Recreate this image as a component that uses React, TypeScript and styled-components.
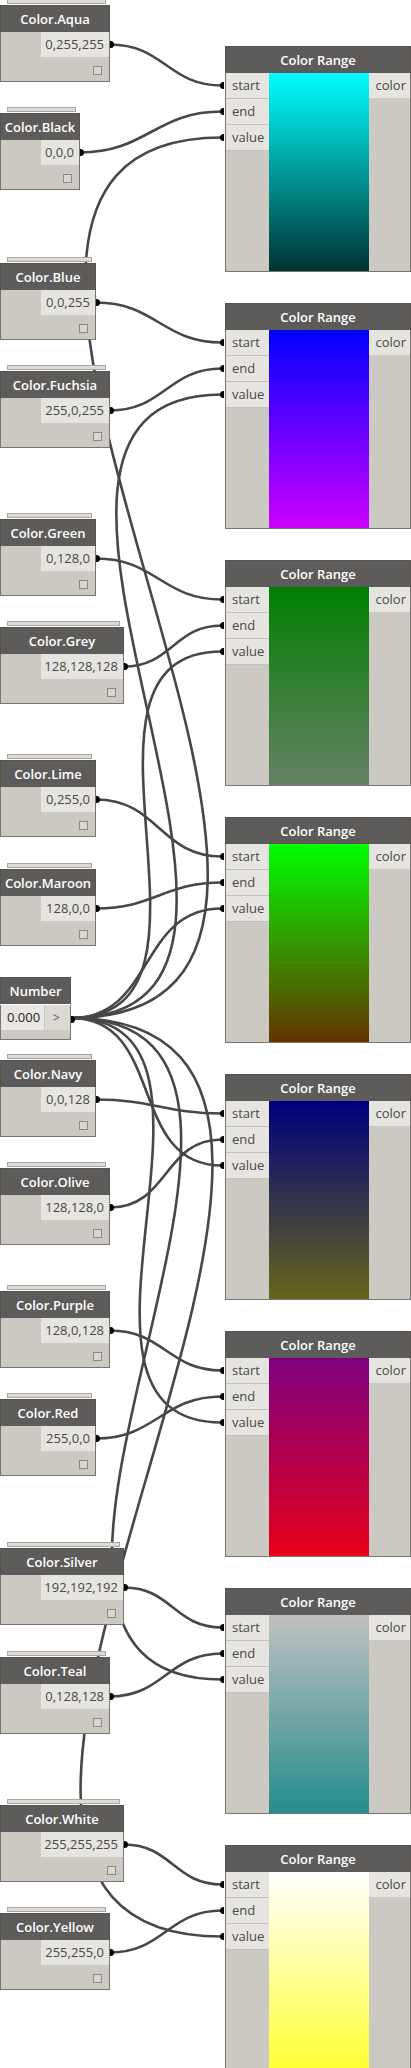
import React from 'react';
import styled, { createGlobalStyle } from 'styled-components';

const GlobalStyle = createGlobalStyle`
  html, body {
    margin: 0;
    padding: 0;
    background: #ffffff;
  }
  body {
    font-family: 'Open Sans', 'Noto Sans', sans-serif;
  }
`;

type RGB = [number, number, number];

type ColorNodeData = {
	name: string;
	rgb: RGB;
	top: number;
	width: number;
};

const HEADER_H = 27;
const RANGE_LEFT = 225;
const RANGE_TOP = 46;
const RANGE_STEP = 257;

const colorNodes: ColorNodeData[] = [
	{ name: 'Aqua', rgb: [0, 255, 255], top: 5, width: 110 },
	{ name: 'Black', rgb: [0, 0, 0], top: 113, width: 80 },
	{ name: 'Blue', rgb: [0, 0, 255], top: 263, width: 96 },
	{ name: 'Fuchsia', rgb: [255, 0, 255], top: 371, width: 110 },
	{ name: 'Green', rgb: [0, 128, 0], top: 519, width: 96 },
	{ name: 'Grey', rgb: [128, 128, 128], top: 627, width: 124 },
	{ name: 'Lime', rgb: [0, 255, 0], top: 760, width: 96 },
	{ name: 'Maroon', rgb: [128, 0, 0], top: 869, width: 96 },
	{ name: 'Navy', rgb: [0, 0, 128], top: 1060, width: 96 },
	{ name: 'Olive', rgb: [128, 128, 0], top: 1168, width: 110 },
	{ name: 'Purple', rgb: [128, 0, 128], top: 1291, width: 110 },
	{ name: 'Red', rgb: [255, 0, 0], top: 1399, width: 96 },
	{ name: 'Silver', rgb: [192, 192, 192], top: 1548, width: 124 },
	{ name: 'Teal', rgb: [0, 128, 128], top: 1657, width: 110 },
	{ name: 'White', rgb: [255, 255, 255], top: 1805, width: 124 },
	{ name: 'Yellow', rgb: [255, 255, 0], top: 1913, width: 110 },
];

const numberNode = { top: 977, width: 71, portY: 1018 };

const ranges = Array.from({ length: 8 }, (_, i) => ({
	top: RANGE_TOP + RANGE_STEP * i,
	start: colorNodes[i * 2],
	end: colorNodes[i * 2 + 1],
}));

// preview stops a bit short of the end colour
const mix = (a: RGB, b: RGB, t: number) =>
	`rgb(${a.map((v, k) => Math.round(v + (b[k] - v) * t)).join(',')})`;

const outPort = (n: ColorNodeData) => ({ x: n.width, y: n.top + HEADER_H + 12.5 });
const inPort = (top: number, row: number) => ({ x: RANGE_LEFT - 3, y: top + HEADER_H + 12.5 + row * 26 });

// dynamo style connector: horizontal tangents, offset grows with length
const wirePath = (a: { x: number; y: number }, b: { x: number; y: number }) => {
	const d = 0.45 * Math.hypot(b.x - a.x, b.y - a.y);
	return `M${a.x},${a.y} C${a.x + d},${a.y} ${b.x - d},${b.y} ${b.x},${b.y}`;
};

const wires: string[] = [];
ranges.forEach((r) => {
	wires.push(wirePath(outPort(r.start), inPort(r.top, 0)));
	wires.push(wirePath(outPort(r.end), inPort(r.top, 1)));
	wires.push(wirePath({ x: numberNode.width, y: numberNode.portY }, inPort(r.top, 2)));
});

const Canvas = styled.div`
	position: relative;
	width: 411px;
	height: 2068px;
	overflow: hidden;
	background: #ffffff;
`;

const WireLayer = styled.svg`
	position: absolute;
	left: 0;
	top: 0;
`;

const NodeBox = styled.div<{ $top: number; $left?: number; $width: number }>`
	position: absolute;
	top: ${(p) => p.$top}px;
	left: ${(p) => p.$left ?? 0}px;
	width: ${(p) => p.$width}px;
	box-sizing: border-box;
`;

const Stack = styled.div`
	position: absolute;
	top: -6px;
	left: 7px;
	right: 4px;
	height: 3px;
	border: 1px solid #a9a6a1;
	background: #dedbd6;
`;

const Header = styled.div`
	height: ${HEADER_H}px;
	background: #5e5c5a;
	border: 1px solid #55524f;
	border-bottom: none;
	box-sizing: border-box;
	color: #ffffff;
	font-size: 13px;
	font-weight: 600;
	line-height: 26px;
	text-align: center;
	white-space: nowrap;
`;

const Body = styled.div<{ $h: number }>`
	position: relative;
	height: ${(p) => p.$h}px;
	background: #ccc8c2;
	border: 1px solid #787571;
	border-top: none;
	box-sizing: border-box;
`;

const OutLabel = styled.div`
	position: relative;
	margin-left: 40px;
	height: 25px;
	padding-right: 5px;
	background: #e6e4e0;
	color: #4a4845;
	font-size: 13px;
	line-height: 25px;
	text-align: right;
	white-space: nowrap;
`;

const OutDot = styled.span<{ $y?: number }>`
	position: absolute;
	top: ${(p) => p.$y ?? 9}px;
	right: -5px;
	width: 4px;
	height: 7px;
	background: #000;
	border-radius: 0 4px 4px 0;
`;

const Check = styled.span`
	position: absolute;
	right: 7px;
	bottom: 6px;
	width: 9px;
	height: 9px;
	box-sizing: border-box;
	border: 1px solid #8c8984;
	background: #d9d6d1;
`;

const RangeBody = styled.div`
	display: grid;
	grid-template-columns: 43px 100px 1fr;
	height: 199px;
	background: #ccc8c2;
	border: 1px solid #787571;
	border-top: none;
	box-sizing: border-box;
`;

const InCol = styled.div`
	display: flex;
	flex-direction: column;
`;

const InLabel = styled.div`
	position: relative;
	height: 25px;
	padding-left: 6px;
	background: #e6e4e0;
	border-bottom: 1px solid #c4bfb8;
	color: #4a4845;
	font-size: 13px;
	line-height: 25px;
`;

const InDot = styled.span`
	position: absolute;
	left: -6px;
	top: 9px;
	width: 4px;
	height: 7px;
	background: #000;
	border-radius: 4px 0 0 4px;
`;

const Swatch = styled.div<{ $from: string; $to: string }>`
	background: linear-gradient(to bottom, ${(p) => p.$from}, ${(p) => p.$to});
`;

const OutCol = styled.div`
	display: flex;
	flex-direction: column;
`;

const ColorOut = styled.div`
	height: 25px;
	padding-right: 4px;
	background: #e6e4e0;
	color: #4a4845;
	font-size: 13px;
	line-height: 25px;
	text-align: right;
`;

const NumberRow = styled.div`
	display: flex;
	margin-top: 1px;
	height: 25px;
`;

const NumberInput = styled.div`
	width: 44px;
	padding-left: 6px;
	box-sizing: border-box;
	background: #e9e7e3;
	border-right: 1px solid #c9c5bf;
	color: #222;
	font-size: 13px;
	line-height: 25px;
`;

const NumberButton = styled.div`
	flex: 1;
	padding-left: 8px;
	background: #dcd9d4;
	color: #555;
	font-size: 12px;
	line-height: 25px;
`;

const ColorNode = ({ node }: { node: ColorNodeData }) => (
	<NodeBox $top={node.top} $width={node.width}>
		<Stack />
		<Header>Color.{node.name}</Header>
		<Body $h={50}>
			<OutLabel>
				{node.rgb.join(',')}
				<OutDot />
			</OutLabel>
			<Check />
		</Body>
	</NodeBox>
);

const RangeNode = ({ top, from, to }: { top: number; from: string; to: string }) => (
	<NodeBox $top={top} $left={RANGE_LEFT} $width={186}>
		<Header>Color Range</Header>
		<RangeBody>
			<InCol>
				{['start', 'end', 'value'].map((l) => (
					<InLabel key={l}>
						<InDot />
						{l}
					</InLabel>
				))}
			</InCol>
			<Swatch $from={from} $to={to} />
			<OutCol>
				<ColorOut>color</ColorOut>
			</OutCol>
		</RangeBody>
	</NodeBox>
);

export default function App() {
	return (
		<>
			<GlobalStyle />
			<Canvas>
				<WireLayer width={411} height={2068} viewBox="0 0 411 2068">
					{wires.map((d, i) => (
						<path key={i} d={d} fill="none" stroke="#474747" strokeWidth={2.6} />
					))}
				</WireLayer>
				{colorNodes.map((n) => (
					<ColorNode key={n.name} node={n} />
				))}
				<NodeBox $top={numberNode.top} $width={numberNode.width}>
					<Header>Number</Header>
					<Body $h={35}>
						<NumberRow>
							<NumberInput>0.000</NumberInput>
							<NumberButton>&gt;</NumberButton>
						</NumberRow>
						<OutDot $y={11} />
					</Body>
				</NodeBox>
				{ranges.map((r) => (
					<RangeNode
						key={r.top}
						top={r.top}
						from={mix(r.start.rgb, r.start.rgb, 0)}
						to={mix(r.start.rgb, r.end.rgb, 0.8)}
					/>
				))}
			</Canvas>
		</>
	);
}
